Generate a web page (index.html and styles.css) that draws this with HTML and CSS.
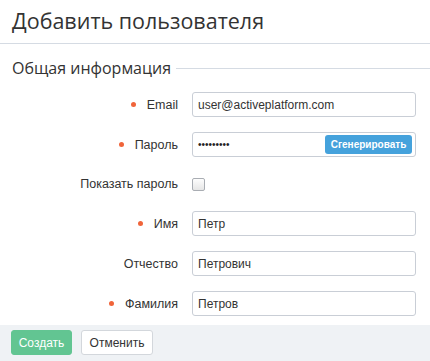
FILE: index.html
```html
<!DOCTYPE html>
<html lang="ru">
<head>
  <meta charset="UTF-8">
  <title>Добавить пользователя</title>
  <link rel="stylesheet" href="styles.css">
</head>
<body>
  <!-- Header -->
  <h1 class="page-title">Добавить пользователя</h1>

  <!-- Form -->
  <form class="user-form">
    <div class="section-title">
      <span>Общая информация</span>
      <span class="section-line"></span>
    </div>

    <div class="form-rows">
      <div class="form-row">
        <label class="form-label required">Email</label>
        <input class="form-input" type="text" value="user@activeplatform.com">
      </div>
      <div class="form-row">
        <label class="form-label required">Пароль</label>
        <div class="password-box">
          <span class="password-dots">•••••••••</span>
          <button type="button" class="generate-button">Сгенерировать</button>
        </div>
      </div>
      <div class="form-row check-row">
        <label class="form-label">Показать пароль</label>
        <span class="checkbox"></span>
      </div>
      <div class="form-row">
        <label class="form-label required">Имя</label>
        <input class="form-input" type="text" value="Петр">
      </div>
      <div class="form-row">
        <label class="form-label">Отчество</label>
        <input class="form-input" type="text" value="Петрович">
      </div>
      <div class="form-row">
        <label class="form-label required">Фамилия</label>
        <input class="form-input" type="text" value="Петров">
      </div>
    </div>
  </form>

  <!-- Footer actions -->
  <footer class="form-actions">
    <button type="button" class="btn btn-create">Создать</button>
    <button type="button" class="btn btn-cancel">Отменить</button>
  </footer>
</body>
</html>
```

FILE: styles.css
```css
* {
  margin: 0;
  padding: 0;
  box-sizing: border-box;
}

body {
  font-family: "Liberation Sans", Arial, sans-serif;
  font-size: 12.5px;
  color: #333;
  background: #fff;
  width: 430px;
  height: 361px;
  overflow: hidden;
}

/* Header */
.page-title {
  font-family: "Open Sans", sans-serif;
  font-weight: 400;
  font-size: 21.5px;
  line-height: 30px;
  color: #333;
  padding: 6px 12px 7px;
  border-bottom: 1px solid #d5dbe3;
}

/* Section */
.user-form {
  padding: 0 0 0 12px;
}

.section-title {
  display: flex;
  align-items: center;
  gap: 5px;
  height: 20px;
  margin-top: 14px;
  font-family: "Open Sans", sans-serif;
  font-size: 16px;
  color: #333;
}

.section-line {
  flex: 1;
  height: 1px;
  background: #d5dbe3;
}

.form-rows {
  display: flex;
  flex-direction: column;
  gap: 15px;
  margin-top: 14px;
}

.form-row {
  display: grid;
  grid-template-columns: 166px 224px;
  column-gap: 14px;
  align-items: center;
  height: 25px;
}

.check-row {
  height: 24px;
}

.form-label {
  text-align: right;
  color: #333;
}

.form-label.required::before {
  content: "";
  display: inline-block;
  width: 5px;
  height: 5px;
  border-radius: 50%;
  background: #f0643a;
  margin-right: 11px;
  vertical-align: 2px;
}

.form-input {
  height: 25px;
  width: 224px;
  border: 1px solid #c9ced6;
  border-radius: 3px;
  padding: 0 5px;
  font-family: "Liberation Sans", Arial, sans-serif;
  font-size: 12px;
  color: #333;
  outline: none;
}

.password-box {
  display: flex;
  align-items: center;
  justify-content: space-between;
  height: 25px;
  width: 224px;
  border: 1px solid #c9ced6;
  border-radius: 3px;
  padding: 0 3px 0 5px;
}

.password-dots {
  font-size: 10px;
  color: #222;
}

.generate-button {
  height: 19px;
  width: 87px;
  border: none;
  border-radius: 3px;
  background: #45a2dc;
  color: #fff;
  font-family: "Liberation Sans", Arial, sans-serif;
  font-size: 10px;
  font-weight: bold;
}

.checkbox {
  width: 13px;
  height: 13px;
  border: 1px solid #a9adb3;
  border-radius: 2px;
  background: linear-gradient(#fdfdfd, #e6e6e6);
}

/* Footer */
.form-actions {
  position: absolute;
  left: 0;
  right: 0;
  top: 325px;
  height: 36px;
  background: #eff2f5;
  display: flex;
  gap: 9px;
  padding: 5px 11px;
  align-items: flex-start;
}

.btn {
  height: 25px;
  padding: 0;
  border-radius: 3px;
  font-family: "Liberation Sans", Arial, sans-serif;
  font-size: 12px;
}

.btn-create {
  width: 61px;
  background: #62c592;
  border: 1px solid #62c592;
  color: #fff;
}

.btn-cancel {
  width: 72px;
  background: #fff;
  border: 1px solid #d3d7dc;
  color: #333;
}
```
